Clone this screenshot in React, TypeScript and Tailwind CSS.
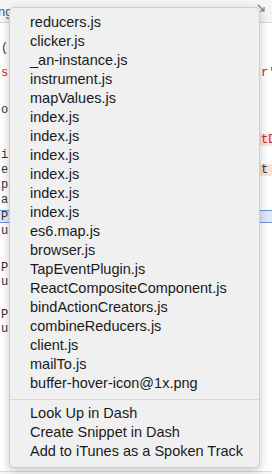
const files = [
  "reducers.js",
  "clicker.js",
  "_an-instance.js",
  "instrument.js",
  "mapValues.js",
  "index.js",
  "index.js",
  "index.js",
  "index.js",
  "index.js",
  "index.js",
  "es6.map.js",
  "browser.js",
  "TapEventPlugin.js",
  "ReactCompositeComponent.js",
  "bindActionCreators.js",
  "combineReducers.js",
  "client.js",
  "mailTo.js",
  "buffer-hover-icon@1x.png",
];

const actions = [
  "Look Up in Dash",
  "Create Snippet in Dash",
  "Add to iTunes as a Spoken Track",
];

type Row = {
  h: string;
  left?: string;
  right?: string;
  leftCls?: string;
  rightCls?: string;
  rowCls?: string;
};

// code editor behind the menu, only the edges show
const rows: Row[] = [
  { h: "h-[18px]" },
  { h: "h-[14px]", left: "(", leftCls: "text-[#333]" },
  { h: "h-[11px]" },
  {
    h: "h-[14px]",
    left: "s'",
    leftCls: "text-[#c8252c]",
    right: "r'",
    rightCls: "text-[#c8252c]",
  },
  { h: "h-[23px]" },
  { h: "h-[14px]", left: "ol", leftCls: "text-[#333]" },
  { h: "h-[16px]" },
  {
    h: "h-[14px]",
    right: "tD",
    rightCls: "text-[#c8252c] bg-[#fbe3d6]",
  },
  { h: "h-[15px]", left: "i", leftCls: "text-[#333]" },
  {
    h: "h-[15px]",
    left: "e",
    leftCls: "text-[#333]",
    right: "t ",
    rightCls: "text-[#333] bg-[#fbe3d6]",
  },
  { h: "h-[15px]", left: "pa", leftCls: "text-[#333]" },
  { h: "h-[15px]", left: "a", leftCls: "text-[#333]" },
  { h: "h-[3px]" },
  {
    h: "h-[13px]",
    left: "Pr",
    leftCls: "text-[#333]",
    rowCls: "bg-[#dfe8fa] border-y border-[#6d8fd6]",
  },
  { h: "h-[15px]", left: "ur", leftCls: "text-[#333]" },
  { h: "h-[23px]" },
  { h: "h-[14px]", left: "Pr", leftCls: "text-[#333]" },
  { h: "h-[14px]", left: "ur", leftCls: "text-[#333]" },
  { h: "h-[19px]" },
  { h: "h-[14px]", left: "Pr", leftCls: "text-[#333]" },
  { h: "h-[14px]", left: "ur", leftCls: "text-[#333]" },
  { h: "h-[69px]" },
  { h: "h-[14px]", left: " j", leftCls: "text-[#3c8c3c]" },
];

export default function App() {
  return (
    <div className="relative w-[272px] h-[474px] overflow-hidden bg-white">
      <div className="flex flex-col h-full font-['Liberation_Mono',monospace] text-[12px] leading-none">
        <div className="h-[23px] shrink-0 flex items-center justify-between bg-[#f5f5f5] border-b border-[#d9d9d9] font-['Liberation_Sans',sans-serif] text-[13px] text-[#555]">
          <span className="-ml-[2px]">ng</span>
          <svg width="10" height="10" viewBox="0 0 10 10" className="mr-[6px] -mt-[6px]">
            <path d="M2 2 L8 8 M8 4 L8 8 L4 8" stroke="#777" strokeWidth="1.2" fill="none" />
          </svg>
        </div>
        {rows.map((r, i) => (
          <div
            key={i}
            className={`${r.h} shrink-0 flex items-center justify-between whitespace-pre ${r.rowCls ?? ""}`}
          >
            <span className={`pl-[1px] ${r.leftCls ?? ""}`}>{r.left ?? ""}</span>
            <span className={`w-[12px] pl-[1px] ${r.rightCls ?? ""}`}>{r.right ?? ""}</span>
          </div>
        ))}
        <div className="flex-1" />
        <div className="h-[3px] shrink-0 border-t border-[#dcdcdc] bg-[#f7f7f7]" />
      </div>

      <div className="absolute left-[9px] top-[7px] w-[251px] py-[5.5px] rounded-[5px] bg-[#f0f0f0] border border-[#cdcdcd] shadow-[0_3px_10px_rgba(0,0,0,0.22)] font-['Liberation_Sans',Arial,sans-serif] text-[14.5px] text-[#1a1a1a]">
        {files.map((f, i) => (
          <div key={i} className="h-[19px] flex items-center pl-[20px]">
            {f}
          </div>
        ))}
        <div className="h-[11px] flex items-center">
          <div className="w-full h-px bg-[#d7d7d7]" />
        </div>
        {actions.map((a) => (
          <div key={a} className="h-[19px] flex items-center pl-[20px]">
            {a}
          </div>
        ))}
      </div>
    </div>
  );
}
